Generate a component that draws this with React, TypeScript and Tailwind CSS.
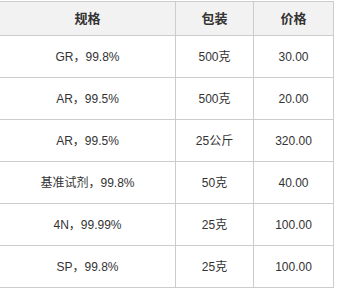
import React from "react";

const rows = [
  { spec: "GR，99.8%", pack: "500克", price: "30.00" },
  { spec: "AR，99.5%", pack: "500克", price: "20.00" },
  { spec: "AR，99.5%", pack: "25公斤", price: "320.00" },
  { spec: "基准试剂，99.8%", pack: "50克", price: "40.00" },
  { spec: "4N，99.99%", pack: "25克", price: "100.00" },
  { spec: "SP，99.8%", pack: "25克", price: "100.00" },
];

const font = {
  fontFamily: '"Liberation Sans", "Noto Sans CJK SC", sans-serif',
};

export default function App() {
  return (
    <div className="w-[338px] h-[292px] bg-white pt-px" style={font}>
      <div className="w-[334px] text-[#333]">
        {/* header */}
        <div className="flex h-[35px] bg-[#f2f2f2] border-t border-b border-[#cccccc] text-[13px] font-bold">
          <div className="w-[176px] border-r border-[#cccccc] flex items-center justify-center">
            规格
          </div>
          <div className="w-[78px] border-r border-[#cccccc] flex items-center justify-center">
            包装
          </div>
          <div className="w-[80px] border-r border-[#cccccc] flex items-center justify-center">
            价格
          </div>
        </div>
        {rows.map((r, i) => (
          <div key={i} className="flex h-[42px] border-b border-[#cccccc] text-[12px]">
            <div className="w-[176px] border-r border-[#cccccc] flex items-center justify-center">
              {r.spec}
            </div>
            <div className="w-[78px] border-r border-[#cccccc] flex items-center justify-center">
              {r.pack}
            </div>
            <div className="w-[80px] border-r border-[#cccccc] flex items-center justify-center">
              {r.price}
            </div>
          </div>
        ))}
      </div>
    </div>
  );
}
